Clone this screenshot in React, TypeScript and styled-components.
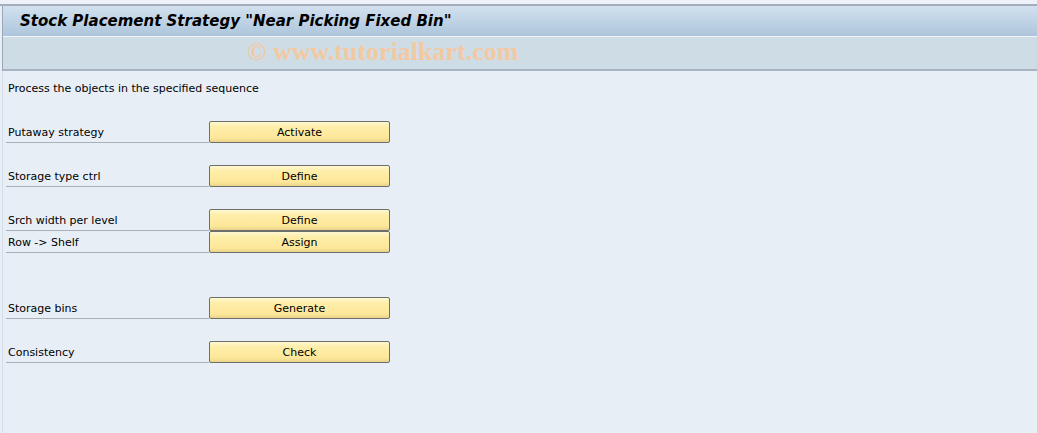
import React from 'react';
import styled, { createGlobalStyle } from 'styled-components';

const GlobalStyle = createGlobalStyle`
  html, body {
    margin: 0;
    padding: 0;
    background: #e8eef6;
  }
  body {
    font-family: Tahoma, "DejaVu Sans", sans-serif;
  }
`;

const Page = styled.div`
  width: 1037px;
  height: 433px;
  overflow: hidden;
  background: #e8eef6;
`;

const TopStrip = styled.div`
  height: 4px;
  background: #eef1f7;
  border-bottom: 2px solid #a3adbb;
`;

const Header = styled.div`
  margin-left: 2px;
  border-left: 1px solid #9aa6b4;
`;

const TitleBar = styled.div`
  height: 30px;
  display: flex;
  align-items: center;
  padding-left: 17px;
  background: linear-gradient(#d2e1ee, #adc5dc);
  border-bottom: 1px solid #f2f6fa;
`;

const Title = styled.h1`
  margin: 0;
  font-family: "DejaVu Sans", sans-serif;
  font-weight: bold;
  font-style: italic;
  font-size: 15px;
  color: #000;
`;

const Toolbar = styled.div`
  height: 32px;
  display: flex;
  align-items: center;
  padding-left: 244px;
  background: #cedce6;
  border-bottom: 2px solid #a6b3c2;
`;

const Watermark = styled.span`
  font-family: "Liberation Serif", serif;
  font-weight: bold;
  font-size: 26px;
  line-height: 1;
  color: #f3c9a1;
  margin-top: -2px;
`;

const Content = styled.div`
  margin-left: 2px;
  border-left: 1px solid #d5dde8;
  padding: 6px 0 0 3px;
  height: 360px;
`;

const Line = styled.div`
  height: 22px;
  display: flex;
  align-items: center;
  padding-left: 2px;
  font-family: "DejaVu Sans", sans-serif;
  font-size: 11px;
  color: #000;
`;

const Row = styled.div`
  height: 22px;
  display: flex;
  align-items: stretch;
`;

const Label = styled.div`
  width: 203px;
  box-sizing: border-box;
  padding: 1px 0 0 2px;
  display: flex;
  align-items: center;
  font-family: "DejaVu Sans", sans-serif;
  font-size: 11px;
  color: #000;
  border-bottom: 1px solid #a9b0b8;
`;

const Button = styled.button`
  width: 181px;
  height: 22px;
  margin: 0;
  padding: 0;
  box-sizing: border-box;
  border: 1px solid #6e6e6e;
  border-radius: 2px;
  background: linear-gradient(#fff8d2 0%, #ffeea8 25%, #fde79a 80%, #e9d38a 100%);
  font-family: "DejaVu Sans", sans-serif;
  font-size: 11px;
  color: #000;
  cursor: pointer;
`;

type Item = { label?: string; action?: string; text?: string };

const lines: Item[] = [
  { text: 'Process the objects in the specified sequence' },
  {},
  { label: 'Putaway strategy', action: 'Activate' },
  {},
  { label: 'Storage type ctrl', action: 'Define' },
  {},
  { label: 'Srch width per level', action: 'Define' },
  { label: 'Row -> Shelf', action: 'Assign' },
  {},
  {},
  { label: 'Storage bins', action: 'Generate' },
  {},
  { label: 'Consistency', action: 'Check' },
];

export default function App() {
  return (
    <Page>
      <GlobalStyle />
      <TopStrip />
      <Header>
        <TitleBar>
          <Title>Stock Placement Strategy "Near Picking Fixed Bin"</Title>
        </TitleBar>
        <Toolbar>
          <Watermark>© www.tutorialkart.com</Watermark>
        </Toolbar>
      </Header>
      <Content>
        {lines.map((l, i) =>
          l.action ? (
            <Row key={i}>
              <Label>{l.label}</Label>
              <Button type="button">{l.action}</Button>
            </Row>
          ) : (
            <Line key={i}>{l.text}</Line>
          )
        )}
      </Content>
    </Page>
  );
}
